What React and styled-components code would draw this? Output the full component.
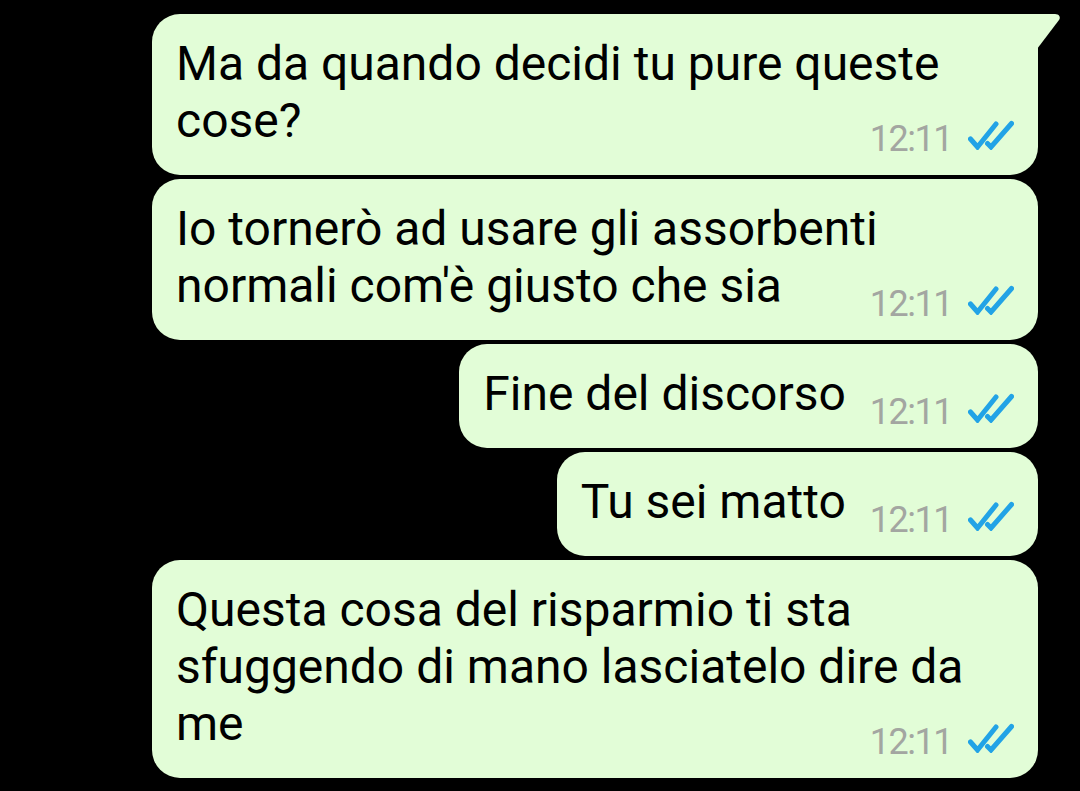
import React from "react";
import styled, { createGlobalStyle } from "styled-components";

const GlobalStyle = createGlobalStyle`
  html, body {
    margin: 0;
    padding: 0;
    background: #000;
  }
  body {
    font-family: Roboto, "Noto Sans", "Liberation Sans", sans-serif;
  }
`;

const Chat = styled.div`
  display: flex;
  flex-direction: column;
  align-items: flex-end;
  gap: 4px;
  padding: 14px 42px 0 0;
`;

const Bubble = styled.div`
  position: relative;
  box-sizing: border-box;
  display: flex;
  flex-wrap: ${(p) => (p.$wide ? "wrap" : "nowrap")};
  width: ${(p) => (p.$wide ? "886px" : "auto")};
  padding: 21px 24px 19px 24px;
  background: #e2fdd7;
  border-radius: ${(p) => (p.$tail ? "28px 0 28px 28px" : "28px")};
`;

const Text = styled.div`
  flex: ${(p) => (p.$wide ? "1 0 100%" : "0 0 auto")};
  font-size: 48px;
  line-height: 57px;
  color: #000;
  white-space: nowrap;
`;

const Line = styled.span`
  display: block;
`;

const Meta = styled.div`
  display: flex;
  align-items: flex-start;
  gap: 16px;
  margin-left: auto;
  margin-top: ${(p) => (p.$wide ? "-27px" : "30px")};
  padding-left: ${(p) => (p.$wide ? "0" : "24px")};
`;

const Time = styled.span`
  font-size: 36px;
  line-height: 34px;
  letter-spacing: -1.5px;
  color: #a3a6a1;
`;

const TickSvg = styled.svg`
  display: block;
  margin-top: -2px;
  flex: none;
`;

const TailSvg = styled.svg`
  position: absolute;
  top: 0;
  left: calc(100% - 1px);
`;

function Ticks() {
  return (
    <TickSvg width="46" height="30" viewBox="0 0 46 30">
      <path
        d="M2.5 19 L9.5 27 L28 4"
        fill="none"
        stroke="#22a3e6"
        strokeWidth="5"
        strokeLinecap="round"
        strokeLinejoin="miter"
      />
      <path
        d="M19.5 23.5 L23 27 L43.5 3.5"
        fill="none"
        stroke="#22a3e6"
        strokeWidth="5"
        strokeLinecap="round"
        strokeLinejoin="miter"
      />
    </TickSvg>
  );
}

function Tail() {
  return (
    <TailSvg width="24" height="36" viewBox="0 0 24 36">
      <path d="M0 0 H18 C22 0 24 3 22 6 L0 35 Z" fill="#e2fdd7" />
    </TailSvg>
  );
}

const messages = [
  { lines: ["Ma da quando decidi tu pure queste", "cose?"], wide: true, tail: true },
  { lines: ["Io tornerò ad usare gli assorbenti", "normali com'è giusto che sia"], wide: true },
  { lines: ["Fine del discorso"] },
  { lines: ["Tu sei matto"] },
  {
    lines: [
      "Questa cosa del risparmio ti sta",
      "sfuggendo di mano lasciatelo dire da",
      "me",
    ],
    wide: true,
  },
];

export default function App() {
  return (
    <>
      <GlobalStyle />
      <Chat>
        {messages.map((m, i) => (
          <Bubble key={i} $wide={m.wide} $tail={m.tail}>
            {m.tail && <Tail />}
            <Text $wide={m.wide}>
              {m.lines.map((l, j) => (
                <Line key={j}>{l}</Line>
              ))}
            </Text>
            <Meta $wide={m.wide}>
              <Time>12:11</Time>
              <Ticks />
            </Meta>
          </Bubble>
        ))}
      </Chat>
    </>
  );
}
